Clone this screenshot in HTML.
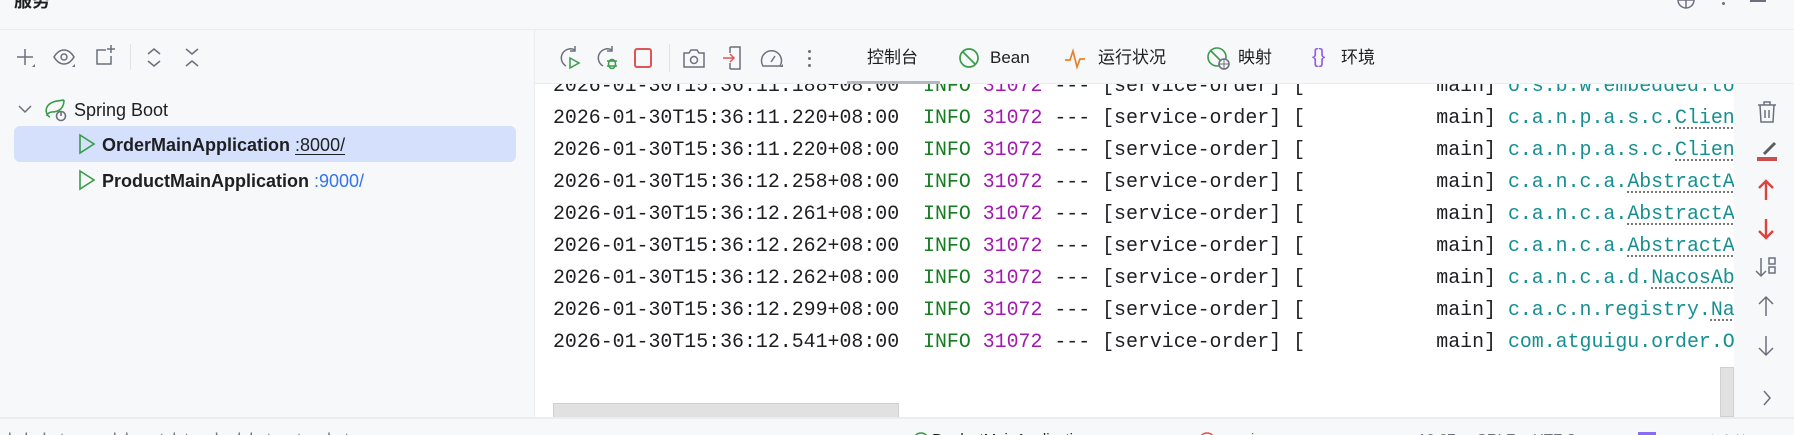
<!DOCTYPE html>
<html><head><meta charset="utf-8"><style>
*{margin:0;padding:0;box-sizing:border-box}
body{width:1794px;height:435px;overflow:hidden;background:#f7f8fa;position:relative;font-family:"Liberation Sans","Noto Sans CJK SC",sans-serif;color:#1e1f22}
.abs{position:absolute}
svg{position:absolute;overflow:visible}
.mono{font-family:"Liberation Mono","DejaVu Sans Mono",monospace;font-size:19.9px;white-space:pre;line-height:32px}
.g{color:#137d1f}.m{color:#a318b3}.t{color:#168f91}
.u{text-decoration:underline dotted #777;text-underline-offset:5px}
.tab{position:absolute;top:46px;font-size:17px;line-height:24px}
</style></head><body>
<div class="abs" style="left:0;top:0;width:1794px;height:30px;border-bottom:1px solid #ebecf0"></div>
<div class="abs" style="left:14px;top:-13px;font-size:18px;font-weight:bold">服务</div>
<svg style="left:1676px;top:-8px" width="20" height="20"><circle cx="10" cy="8" r="8" fill="none" stroke="#6c707e" stroke-width="1.5"/><path d="M10 0v16M2 8h16" stroke="#6c707e" stroke-width="1.5"/></svg>
<div class="abs" style="left:1722px;top:2px;width:3px;height:3px;border-radius:2px;background:#6c707e"></div>
<div class="abs" style="left:1750px;top:0;width:16px;height:2px;background:#6c707e"></div>

<div class="abs" style="left:534px;top:30px;width:1px;height:388px;background:#ebecf0"></div>
<svg style="left:15px;top:47px" width="24" height="24" fill="none" stroke="#6c707e" stroke-width="1.5"><path d="M10 2v16M2 10h16"/><path d="M17 20l3-3v3z" fill="#6c707e" stroke="none"/></svg>
<svg style="left:53px;top:47px" width="26" height="24" fill="none" stroke="#6c707e" stroke-width="1.5"><path d="M1 10c3-5 6-7 10-7s7 2 10 7c-3 5-6 7-10 7s-7-2-10-7z"/><circle cx="11" cy="10" r="3"/><path d="M19 20l3-3v3z" fill="#6c707e" stroke="none"/></svg>
<svg style="left:94px;top:44px" width="24" height="24" fill="none" stroke="#6c707e" stroke-width="1.5"><path d="M12 6H3v14h14v-8"/><path d="M17 1v8M13 5h8"/></svg>
<div class="abs" style="left:130px;top:44px;width:1px;height:26px;background:#dfe1e5"></div>
<svg style="left:146px;top:47px" width="16" height="22" fill="none" stroke="#6c707e" stroke-width="1.5"><path d="M2 7l6-5 6 5M2 14l6 5 6-5"/></svg>
<svg style="left:184px;top:47px" width="16" height="22" fill="none" stroke="#6c707e" stroke-width="1.5"><path d="M2 2l6 5 6-5M2 19l6-5 6 5"/></svg>

<svg style="left:18px;top:104px" width="14" height="10" fill="none" stroke="#6c707e" stroke-width="1.5"><path d="M1 2l6 6 6-6"/></svg>
<svg style="left:44px;top:99px" width="26" height="24" fill="none" stroke="#3a9b4a" stroke-width="1.6"><path d="M20 1c0 8-5 12-12 12-3 0-5 2-5 4M20 1c-6 1-14 1-17 7-2 4 0 9 3 10"/><circle cx="17" cy="17" r="4.5" stroke="#6c707e"/><path d="M17 12v5" stroke="#6c707e"/></svg>
<div class="abs" style="left:74px;top:98px;font-size:18px;line-height:24px">Spring Boot</div>

<div class="abs" style="left:14px;top:126px;width:502px;height:36px;border-radius:6px;background:#d5e1fc"></div>
<svg style="left:78px;top:134px" width="18" height="20" fill="none" stroke="#3a9b4a" stroke-width="1.6"><path d="M2 1l14 9-14 9z"/></svg>
<div class="abs" style="left:102px;top:133px;font-size:18px;line-height:24px"><b>OrderMainApplication</b> <span style="text-decoration:underline;text-underline-offset:3px">:8000/</span></div>
<svg style="left:78px;top:170px" width="18" height="20" fill="none" stroke="#3a9b4a" stroke-width="1.6"><path d="M2 1l14 9-14 9z"/></svg>
<div class="abs" style="left:102px;top:169px;font-size:18px;line-height:24px"><b>ProductMainApplication</b> <span style="color:#3574f0">:9000/</span></div>

<div class="abs" style="left:535px;top:83px;width:1259px;height:1px;background:#ebecf0"></div>
<svg style="left:558px;top:46px" width="24" height="24" fill="none" stroke="#6c707e" stroke-width="1.5"><path d="M17 4a9 9 0 1 0-9 16"/><path d="M17 0v5h-5"/><path d="M12 12l9 5-9 5z" stroke="#3a9b4a"/></svg>
<svg style="left:595px;top:46px" width="24" height="24" fill="none" stroke="#6c707e" stroke-width="1.5"><path d="M17 4a9 9 0 1 0-9 16"/><path d="M17 0v5h-5"/><ellipse cx="17" cy="18" rx="3.5" ry="4.5" stroke="#3a9b4a"/><path d="M12 15h10M12 20h10" stroke="#3a9b4a"/></svg>
<div class="abs" style="left:634px;top:48px;width:18px;height:20px;border:2px solid #e05555;border-radius:3px"></div>
<div class="abs" style="left:669px;top:44px;width:1px;height:28px;background:#dfe1e5"></div>
<svg style="left:682px;top:48px" width="24" height="22" fill="none" stroke="#6c707e" stroke-width="1.5"><path d="M2 5h5l2-3h6l2 3h5v14H2z"/><circle cx="12" cy="12" r="3.5"/></svg>
<svg style="left:722px;top:45px" width="22" height="26" fill="none" stroke-width="1.5"><path d="M8 2h10v22H8M8 2v6M8 24v-6" stroke="#6c707e"/><path d="M1 13h11M8 9l4 4-4 4" stroke="#e05555"/></svg>
<svg style="left:760px;top:47px" width="26" height="24" fill="none" stroke="#6c707e" stroke-width="1.5"><path d="M3 19a10 10 0 1 1 17 0z"/><path d="M11 15l4-6"/><path d="M20 20l3-3v3z" fill="#6c707e" stroke="none"/></svg>
<div class="abs" style="left:808px;top:50px;width:3px;height:3px;border-radius:2px;background:#6c707e;box-shadow:0 7px 0 #6c707e,0 14px 0 #6c707e"></div>
<div class="tab" style="left:867px">控制台</div>
<div class="abs" style="left:847px;top:81px;width:93px;height:3px;background:#b4b8bf"></div>
<svg style="left:959px;top:48px" width="22" height="22" fill="none" stroke="#3a9b4a" stroke-width="1.7"><circle cx="10" cy="10" r="9"/><path d="M4 4l12 12"/></svg>
<div class="tab" style="left:990px">Bean</div>
<svg style="left:1065px;top:49px" width="22" height="20" fill="none" stroke="#e8822a" stroke-width="1.7"><path d="M0 11h5l3-9 4 16 3-8h5"/></svg>
<div class="tab" style="left:1098px">运行状况</div>
<svg style="left:1207px;top:47px" width="24" height="24" fill="none" stroke-width="1.6"><circle cx="10" cy="10" r="9" stroke="#3a9b4a"/><path d="M4 4l10 10" stroke="#3a9b4a"/><circle cx="17" cy="17" r="5" fill="#f7f8fa" stroke="#6c707e"/><path d="M12 17h10M17 12v10" stroke="#6c707e" stroke-width="1"/></svg>
<div class="tab" style="left:1238px">映射</div>
<div class="abs" style="left:1312px;top:44px;font-size:20px;color:#8e5ce8;line-height:26px">{}</div>
<div class="tab" style="left:1341px">环境</div>

<div class="abs" style="left:535px;top:84px;width:1199px;height:334px;background:#fff;overflow:hidden">
<div class="mono" style="position:absolute;left:18px;top:-14px">2026-01-30T15:36:11.188+08:00  <span class="g">INFO</span> <span class="m">31072</span> --- [service-order] [           main] <span class="t">o.s.b.w.embedded.tomcat.TomcatWebServer</span>
2026-01-30T15:36:11.220+08:00  <span class="g">INFO</span> <span class="m">31072</span> --- [service-order] [           main] <span class="t">c.a.n.p.a.s.c.<span class="u">ClientAuthPluginManager</span></span>
2026-01-30T15:36:11.220+08:00  <span class="g">INFO</span> <span class="m">31072</span> --- [service-order] [           main] <span class="t">c.a.n.p.a.s.c.<span class="u">ClientAuthPluginManager</span></span>
2026-01-30T15:36:12.258+08:00  <span class="g">INFO</span> <span class="m">31072</span> --- [service-order] [           main] <span class="t">c.a.n.c.a.<span class="u">AbstractAbilityControlManager</span></span>
2026-01-30T15:36:12.261+08:00  <span class="g">INFO</span> <span class="m">31072</span> --- [service-order] [           main] <span class="t">c.a.n.c.a.<span class="u">AbstractAbilityControlManager</span></span>
2026-01-30T15:36:12.262+08:00  <span class="g">INFO</span> <span class="m">31072</span> --- [service-order] [           main] <span class="t">c.a.n.c.a.<span class="u">AbstractAbilityControlManager</span></span>
2026-01-30T15:36:12.262+08:00  <span class="g">INFO</span> <span class="m">31072</span> --- [service-order] [           main] <span class="t">c.a.n.c.a.d.<span class="u">NacosAbilityManagerHolder</span></span>
2026-01-30T15:36:12.299+08:00  <span class="g">INFO</span> <span class="m">31072</span> --- [service-order] [           main] <span class="t">c.a.c.n.registry.<span class="u">NacosServiceRegistry</span></span>
2026-01-30T15:36:12.541+08:00  <span class="g">INFO</span> <span class="m">31072</span> --- [service-order] [           main] <span class="t">com.atguigu.order.OrderMainApplication</span></div>
<div class="abs" style="left:18px;top:319px;width:346px;height:15px;background:#e1e1e1;border:1px solid #d0d0d0"></div>
</div>
<div class="abs" style="left:1720px;top:367px;width:14px;height:50px;background:#e1e1e1;border:1px solid #d0d0d0"></div>

<svg style="left:1756px;top:100px" width="22" height="24" fill="none" stroke="#6c707e" stroke-width="1.5"><path d="M2 5h18M8 5V2h6v3M4 5l1 17h12l1-17M9 10v8M13 10v8"/></svg>
<svg style="left:1756px;top:140px" width="22" height="22" fill="none"><path d="M8 14L19 3" stroke="#5a5d63" stroke-width="3"/><rect x="1" y="17" width="20" height="4" fill="#c94f4f"/></svg>
<svg style="left:1757px;top:179px" width="18" height="22" fill="none" stroke="#d9443f" stroke-width="2.4"><path d="M9 21V2M2 9l7-7 7 7"/></svg>
<svg style="left:1757px;top:218px" width="18" height="22" fill="none" stroke="#d9443f" stroke-width="2.4"><path d="M9 1v19M2 13l7 7 7-7"/></svg>
<svg style="left:1755px;top:256px" width="22" height="22" fill="none" stroke="#6c707e" stroke-width="1.5"><path d="M6 2v18M1 15l5 5 5-5"/><rect x="14" y="2" width="6" height="6"/><rect x="14" y="11" width="6" height="6"/></svg>
<svg style="left:1758px;top:295px" width="16" height="22" fill="none" stroke="#6c707e" stroke-width="1.5"><path d="M8 21V2M1 9l7-7 7 7"/></svg>
<svg style="left:1758px;top:335px" width="16" height="22" fill="none" stroke="#6c707e" stroke-width="1.5"><path d="M8 1v19M1 13l7 7 7-7"/></svg>
<svg style="left:1762px;top:390px" width="10" height="16" fill="none" stroke="#6c707e" stroke-width="1.5"><path d="M2 1l6 7-6 7"/></svg>

<div class="abs" style="left:0;top:417px;width:1794px;height:18px;background:#f7f8fa;border-top:2px solid #ebecf0;overflow:hidden">
<div class="abs" style="left:8px;top:12px;font-size:16px;color:#6c707e;white-space:nowrap;letter-spacing:2px">lab·h  t  p  n  d  b  e  t  l  t  n  h  d  b  t  n  t  o  b  t</div>
<svg style="left:912px;top:13px" width="18" height="18" fill="none" stroke="#3a9b4a" stroke-width="1.5"><circle cx="9" cy="9" r="8"/></svg>
<div class="abs" style="left:932px;top:12px;font-size:15px;color:#1e1f22">ProductMainApplication</div>
<svg style="left:1198px;top:13px" width="18" height="18" fill="none" stroke="#e05555" stroke-width="1.5"><circle cx="9" cy="9" r="8"/></svg>
<div class="abs" style="left:1230px;top:12px;font-size:15px;color:#6c707e">main</div>
<div class="abs" style="left:1418px;top:12px;font-size:15px;color:#6c707e;white-space:pre">10:67</div>
<div class="abs" style="left:1476px;top:12px;font-size:15px;color:#6c707e">CRLF</div>
<div class="abs" style="left:1533px;top:12px;font-size:15px;color:#6c707e">UTF-8</div>
<div class="abs" style="left:1638px;top:13px;width:18px;height:14px;background:#8b6cf0"></div>
<div class="abs" style="left:1692px;top:12px;font-size:15px;color:#6c707e">4 个字符</div>
</div>
</body></html>
